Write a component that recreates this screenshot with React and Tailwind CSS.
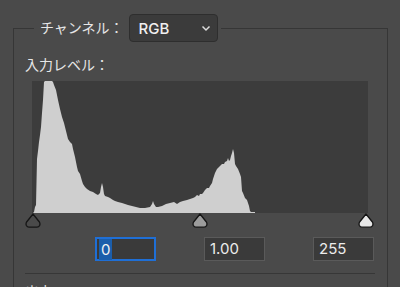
// Levels dialog — input levels panel

const HIST = [
  [33, 212], [34, 211], [35, 206], [36, 204], [37, 158], [38, 150], [39, 141], [40, 134], [41, 126],
  [42, 112], [43, 99], [44, 81], [45, 80], [52, 80], [53, 81], [54, 84], [56, 89], [58, 99], [60, 108],
  [62, 116], [64, 122], [65, 126], [67, 134], [68, 138], [70, 141], [72, 143], [73, 148], [75, 156],
  [77, 166], [78, 170], [80, 173], [82, 180], [83, 183], [85, 186], [87, 188], [90, 190], [93, 191],
  [96, 193], [98, 194], [100, 192], [101, 186], [102, 182], [103, 186], [104, 193], [105, 195],
  [108, 196], [110, 197], [113, 199], [115, 200], [118, 201], [122, 202], [125, 203], [128, 204],
  [132, 205], [136, 206], [140, 207], [145, 207], [150, 206], [152, 203], [153, 200], [154, 203],
  [156, 206], [158, 206], [162, 205], [166, 203], [170, 202], [174, 201], [177, 203], [180, 201],
  [183, 200], [187, 199], [190, 198], [193, 197], [195, 196], [197, 194], [199, 195], [200, 193],
  [202, 193], [203, 192], [205, 189], [207, 187], [209, 187], [210, 185], [212, 182], [213, 178],
  [215, 172], [217, 168], [219, 166], [220, 165], [222, 163], [224, 163], [225, 161], [227, 160],
  [228, 157], [229, 160], [230, 159], [231, 155], [232, 152], [233, 148], [234, 152], [235, 163],
  [236, 165], [238, 168], [240, 173], [241, 176], [242, 190], [243, 192], [245, 197], [247, 199],
  [248, 202], [249, 205], [250, 210], [251, 211], [255, 211], [255, 212],
]

function Handle({ fill, className }) {
  return (
    <svg width="16" height="16" viewBox="0 0 16 16" className={className}>
      <path
        d="M8 1 L14.4 9 Q15.4 10.6 14.6 12.6 Q13.9 14.2 12 14.2 L4 14.2 Q2.1 14.2 1.4 12.6 Q0.6 10.6 1.6 9 Z"
        fill={fill}
        stroke="#151515"
        strokeWidth="1.3"
        strokeLinejoin="round"
      />
    </svg>
  )
}

function LevelBox({ value, active }) {
  return (
    <div
      className={
        active
          ? "flex h-[24px] w-[61px] items-center border-2 border-[#1f6fd6] bg-[#3a3a3a] pl-[2px]"
          : "flex h-[24px] w-[61px] items-center border border-[#5a5a5a] bg-[#3a3a3a] pl-[5px]"
      }
    >
      <span
        className={
          active
            ? "bg-[#1b5eab] px-[2px] text-[15px] leading-[21px] text-[#f2f2f2]"
            : "text-[15px] leading-[20px] text-[#ececec]"
        }
      >
        {value}
      </span>
    </div>
  )
}

export default function App() {
  const points = HIST.map((p) => p.join(",")).join(" ")

  return (
    <div
      className="h-[287px] w-[400px] overflow-hidden bg-[#4a4a4a] text-[#e6e6e6]"
      style={{ fontFamily: 'Inter, "Noto Sans CJK JP", sans-serif' }}
    >
      <fieldset className="ml-[13px] mt-[14px] w-[375px] border border-[#363636] p-0">
        {/* Channel selector sits in the group border */}
        <legend className="ml-[20px] flex items-center gap-[5px] pl-[6px] pr-[3px]">
          <span className="text-[14px] leading-[20px]">チャンネル：</span>
          <div className="flex h-[28px] w-[89px] items-center justify-between rounded-[4px] border border-[#2e2e2e] bg-[#3b3b3b] pl-[9px] pr-[6px]">
            <span className="text-[15px] font-medium leading-none text-[#f0f0f0]">RGB</span>
            <svg width="10" height="7" viewBox="0 0 10 7">
              <path d="M1.5 1.5 L5 5 L8.5 1.5" fill="none" stroke="#dcdcdc" strokeWidth="1.5" />
            </svg>
          </div>
        </legend>

        <p className="ml-[11px] mt-[13px] text-[14px] leading-[20px]">入力レベル：</p>

        {/* Histogram */}
        <div className="ml-[18px] mt-[6px] h-[132px] w-[336px] bg-[#3c3c3c]">
          <svg width="336" height="132" viewBox="32 80 336 132" className="block">
            <polygon points={points} fill="#cfcfcf" />
          </svg>
        </div>

        {/* Slider handles */}
        <div className="relative ml-[18px] h-[16px] w-[336px]">
          <Handle fill="#4a4a4a" className="absolute left-[-7px] top-0" />
          <Handle fill="#9c9c9c" className="absolute left-[160px] top-0" />
          <Handle fill="#e8e8e8" className="absolute left-[326px] top-0" />
        </div>

        <div className="ml-[81px] mt-[8px] flex gap-[48px]">
          <LevelBox value="0" active />
          <LevelBox value="1.00" />
          <LevelBox value="255" />
        </div>

        <div className="ml-[11px] mt-[12px] w-[350px] border-t border-[#373737]" />

        <p className="ml-[11px] mt-[8px] text-[14px] leading-[20px]">出力レベル：</p>
        <div className="h-[40px]" />
      </fieldset>
    </div>
  )
}
